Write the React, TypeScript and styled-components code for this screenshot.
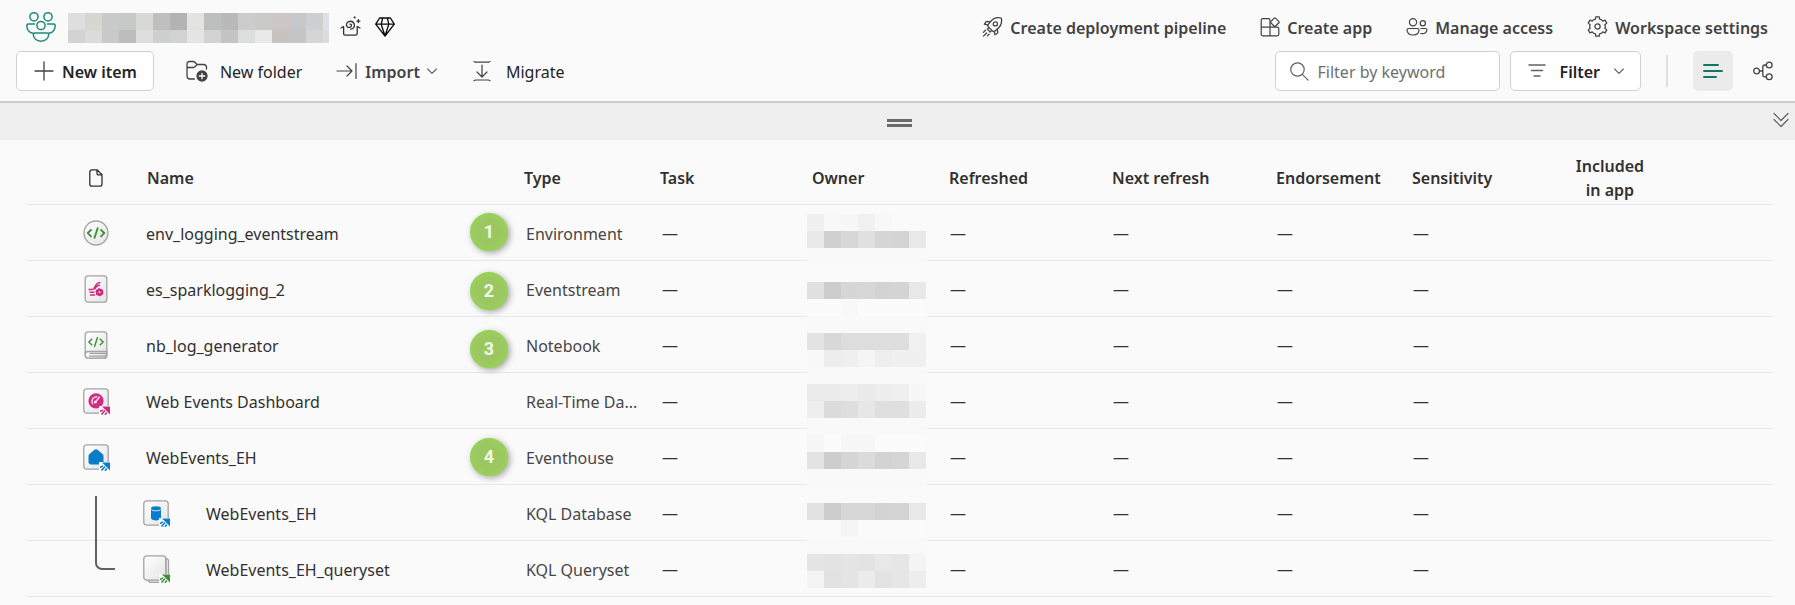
import React from "react";
import styled, { createGlobalStyle } from "styled-components";

const GlobalStyle = createGlobalStyle`
  *, *::before, *::after { box-sizing: border-box; }
  body {
    margin: 0;
    background: #fafafa;
    color: #242424;
    font-family: "Segoe UI", "Noto Sans", "Open Sans", sans-serif;
    font-size: 16px;
    line-height: 24px;
  }
  button, input { font: inherit; color: inherit; }
`;

/* ---------- Layout ---------- */

const Header = styled.header`
  display: flex;
  flex-direction: column;
  gap: 4px;
  padding: 6px 12px 10px 16px;
  border-bottom: 2px solid #cecece;
`;

const Bar = styled.div<{ $height: number }>`
  display: flex;
  align-items: center;
  justify-content: space-between;
  height: ${(p) => p.$height}px;
`;

const WorkspaceTitle = styled.div`
  display: flex;
  align-items: center;
  padding-left: 10px;
`;

const TitleMosaic = styled.div`
  display: grid;
  grid-template-columns: repeat(15, 17px) 6px;
  grid-template-rows: 17px 13px;
  margin: 3px 11px 0 12px;
`;

const Tile = styled.span<{ $color: string }>`
  background: ${(p) => p.$color};
`;

const TitleBadges = styled.div`
  display: flex;
  align-items: center;
  gap: 14px;
`;

const WorkspaceActions = styled.nav`
  display: flex;
  align-items: center;
  gap: 34px;
  padding-right: 15px;
`;

const Commands = styled.div`
  display: flex;
  align-items: center;
`;

const Label = styled.span`
  padding-top: 2px;
`;

const PlainButton = styled.button<{ $gap: number; $bold?: boolean; $start?: number }>`
  display: flex;
  align-items: center;
  gap: ${(p) => p.$gap}px;
  margin: 0 0 0 ${(p) => p.$start ?? 0}px;
  padding: 0;
  border: 0;
  background: none;
  color: ${(p) => (p.$bold ? "#424242" : "#242424")};
  font-weight: ${(p) => (p.$bold ? 600 : 400)};
  white-space: nowrap;
  cursor: pointer;
`;

const OutlineButton = styled.button<{ $gap: number }>`
  display: flex;
  align-items: center;
  gap: ${(p) => p.$gap}px;
  height: 40px;
  padding: 0 16px 0 17px;
  border: 1px solid #d1d1d1;
  border-radius: 5px;
  background: #fff;
  font-weight: 600;
  white-space: nowrap;
  cursor: pointer;
`;

const SearchBox = styled.label`
  display: flex;
  align-items: center;
  gap: 9px;
  width: 225px;
  height: 40px;
  margin-right: 10px;
  padding: 0 14px;
  border: 1px solid #d1d1d1;
  border-radius: 5px;
  background: #fff;
  color: #616161;
`;

const SearchInput = styled.input`
  flex: 1;
  min-width: 0;
  padding: 2px 0 0;
  border: 0;
  outline: 0;
  background: none;
  &::placeholder { color: #707070; opacity: 1; }
`;

const Divider = styled.span`
  width: 2px;
  height: 32px;
  margin: 0 25px;
  background: #e0e0e0;
`;

const ViewButton = styled.button<{ $active?: boolean }>`
  display: grid;
  place-items: center;
  width: 40px;
  height: 40px;
  margin-left: ${(p) => (p.$active ? 0 : 10)}px;
  padding: 0;
  border: 0;
  border-radius: 5px;
  background: ${(p) => (p.$active ? "#ebebeb" : "none")};
  color: ${(p) => (p.$active ? "#117865" : "#424242")};
  cursor: pointer;
`;

const Splitter = styled.div`
  display: grid;
  grid-template-columns: 1fr auto 1fr;
  align-items: center;
  height: 37px;
  padding: 0 6px 0 10px;
  background: #efefef;
`;

const Grip = styled.span`
  grid-column: 2;
  width: 25px;
  height: 8px;
  margin-top: 2px;
  border: solid #6b6b6b;
  border-width: 3px 0;
`;

const CollapseButton = styled.button`
  display: flex;
  justify-self: end;
  padding: 0 0 4px;
  border: 0;
  background: none;
  color: #616161;
  cursor: pointer;
`;

/* ---------- Item list ---------- */

const ListArea = styled.main`
  position: relative;
  padding: 0 22px 0 26px;
`;

const Table = styled.table`
  width: 100%;
  table-layout: fixed;
  border-collapse: separate;
  border-spacing: 0;
`;

const Col = styled.col<{ $width?: number }>`
  width: ${(p) => (p.$width ? `${p.$width}px` : "auto")};
`;

const Th = styled.th<{ $center?: boolean; $indent?: number }>`
  height: 65px;
  padding: 12px 0 0 ${(p) => p.$indent ?? 0}px;
  border-bottom: 1px solid #e8e8e8;
  color: #323130;
  font-weight: 600;
  text-align: ${(p) => (p.$center ? "center" : "left")};
`;

const Td = styled.td<{ $indent?: number; $muted?: boolean }>`
  position: relative;
  height: 56px;
  padding: 0 0 0 ${(p) => p.$indent ?? 0}px;
  border-bottom: 1px solid #e8e8e8;
  color: ${(p) => (p.$muted ? "#484644" : "#323130")};
  white-space: nowrap;
`;

const CellText = styled.div`
  padding-top: 2px;
`;

const ItemLink = styled.a`
  display: flex;
  align-items: center;
  gap: 36px;
  color: inherit;
  text-decoration: none;
`;

const IconSlot = styled.div`
  display: flex;
`;

const TreeLine = styled.span`
  position: absolute;
  top: 11px;
  left: 69px;
  width: 20px;
  height: 74px;
  border: solid #616161;
  border-width: 0 0 2px 2px;
  border-bottom-left-radius: 7px;
`;

const OwnerMosaic = styled.div`
  position: absolute;
  z-index: 1;
  top: 9px;
  left: 0;
  display: grid;
  grid-template-columns: repeat(7, 17px);
  grid-auto-rows: 17px;
  padding-right: 1px;
  background: #fafafa;
`;

const Pin = styled.span<{ $y: number }>`
  position: absolute;
  top: ${(p) => p.$y}px;
  left: 470px;
  display: grid;
  place-items: center;
  width: 38px;
  height: 38px;
  border: 2px solid #95d44d;
  border-radius: 50%;
  background: #9ac75f;
  box-shadow: 2px 2px 6px rgba(0, 0, 0, 0.35), inset 0 0 6px #a3cf6b;
  color: #f2f8e8;
  font: 700 18px/24px Roboto, Inter, sans-serif;
`;

/* ---------- Line icons ---------- */

type LineIconProps = { size: number; children: React.ReactNode; width?: number; stroke?: number; box?: string; color?: string };

function LineIcon({ size, children, width, stroke = 1.2, box = "0 0 20 20", color = "currentColor" }: LineIconProps) {
  return (
    <svg width={width ?? size} height={size} viewBox={box} fill="none" stroke={color} strokeWidth={stroke} strokeLinecap="round" strokeLinejoin="round" aria-hidden="true">
      {children}
    </svg>
  );
}

const WorkspaceLogo = () => (
  <LineIcon size={30} box="0 0 30 30" stroke={1.5} color="#1f8a76">
    <circle cx="8" cy="4.8" r="4.1" />
    <circle cx="22" cy="4.8" r="4.1" />
    <circle cx="15" cy="13.5" r="4.1" />
    <path d="M8.5 12H2.3C1.3 12 .8 12.6 .8 13.5c0 4 2.5 7.2 6.2 7.7" />
    <path d="M21.5 12h6.2c1 0 1.5.6 1.5 1.5 0 4-2.5 7.2-6.2 7.7" />
    <path d="M8.8 21h12.4c1 0 1.500.6 1.500 1.500 0 3.800-3.300 6.700-7.700 6.700s-7.700-2.900-7.700-6.700c0-.9.5-1.500 1.500-1.500Z" />
  </LineIcon>
);

const MagicBox = () => (
  <LineIcon size={21} box="0 0 21 21" stroke={1.3} color="#323232">
    <path d="M1 12 3.600 10.500v7.100c0 1 .6 1.600 1.600 1.600h10.400c1 0 1.600-.6 1.600-1.600v-7.100L20 12" />
    <path d="M10.600 13.200c3-.4 4.100-2.500 3.700-4.700C13.800 6.200 11.900 5 9.800 5.300 7.600 5.600 6.200 7.300 6.500 9.100c.2 1.600 1.600 2.500 3 2.300 1.300-.2 2.100-1.300 1.900-2.300-.1-.7-.8-1.100-1.500-.9" />
    <path d="M18.400 3.600v3M16.900 5.100h3" />
    <circle cx="14.600" cy="1.400" r=".4" fill="#323232" />
  </LineIcon>
);

const Diamond = () => (
  <LineIcon size={20} box="0 0 20 20" stroke={1.300} color="#0a0a0a">
    <path d="M4.600 1h10.800L19.300 7.200 10 19 .7 7.200ZM.7 7.200h18.600M7.700 1 6.200 7.200 10 19l3.800-11.800L12.300 1" />
  </LineIcon>
);

const Rocket = () => (
  <LineIcon size={21}>
    <path d="M18.300 1.900c-4.300-1.200-7.600.2-10.400 3.600L5.600 8.400c-.4.500-.4 1 .1 1.500l4.700 4.700c.4.400 1 .4 1.500.1l2.700-2.300c3.400-2.900 4.900-6.200 3.700-10.500Z" />
    <circle cx="12.700" cy="7.500" r="2" />
    <path d="M7.800 5.600 4.900 5.200c-.5 0-.9.100-1.200.4L2.300 7.800l3.500.7M14.600 12.500l.4 2.800c0 .5-.1.900-.4 1.200l-2.200 1.400-.8-3.400M6.600 11l-1.500 1.500 2.700 2.700 1.500-1.500M3.300 13.600l-2 2M4.400 16.200l-3 3M6.800 17.300l-1.500 1.500" />
  </LineIcon>
);

const AppAdd = () => (
  <LineIcon size={20}>
    <path d="M10 10.200H1.200V3.200c0-.9.600-1.500 1.500-1.500H8.500c.9 0 1.500.6 1.500 1.500v15.600H2.700c-.9 0-1.500-.6-1.500-1.500v-7.100M10 10.200h7.300c.9 0 1.500.6 1.500 1.500v5.600c0 .9-.6 1.500-1.500 1.500H10" />
    <path d="M14 1.300c.5-.5 1.200-.5 1.700 0l3 3c.5.500.5 1.200 0 1.700l-3 3c-.5.500-1.200.5-1.700 0l-3-3c-.5-.5-.5-1.200 0-1.700Z" />
  </LineIcon>
);

const People = () => (
  <LineIcon size={20} width={22} box="0 0 22 20">
    <circle cx="7" cy="5.200" r="3.600" />
    <circle cx="16.800" cy="6.200" r="2.600" />
    <path d="M2.600 11.500h8.800c1 0 1.600.6 1.600 1.600 0 3-2.500 4.900-6 4.900s-6-1.900-6-4.900c0-1 .6-1.600 1.600-1.600ZM14.900 11.500h4.500c.9 0 1.500.6 1.500 1.500 0 2.600-2.800 4.300-6.100 3.500" />
  </LineIcon>
);

const polar = (radius: number, degrees: number) => {
  const a = (degrees * Math.PI) / 180;
  return `${(10 + radius * Math.sin(a)).toFixed(2)} ${(10 - radius * Math.cos(a)).toFixed(2)}`;
};

const gearPath =
  "M" +
  [0, 60, 120, 180, 240, 300]
    .map((t) => [polar(9.4, t - 10), polar(9.4, t + 10), polar(7.2, t + 16), polar(7.4, t + 26), polar(7.4, t + 34), polar(7.2, t + 44)].join("L"))
    .join("L") +
  "Z";

const Gear = () => (
  <LineIcon size={21}>
    <path d={gearPath} />
    <circle cx="10" cy="10" r="2.500" />
  </LineIcon>
);

const Plus = () => (
  <LineIcon size={20} stroke={1.300} color="#424242"><path d="M10 1v18M1 10h18" /></LineIcon>
);

const FolderAdd = () => (
  <LineIcon size={22} box="0 0 22 22" stroke={1.300} color="#424242">
    <path d="M8.500 19H4c-1.700 0-3-1.300-3-3V4c0-1.500 1.100-2.500 2.500-2.500h3.700c.7 0 1.200.2 1.700.7L11 4.500h6.500c1.700 0 3 1.300 3 3V9M1 7.500h6.200c.7 0 1.200-.2 1.700-.7L11 4.500" />
    <circle cx="16" cy="16" r="5" fill="#424242" />
    <path d="M16 13.300v5.400M13.300 16h5.400" stroke="#fff" />
  </LineIcon>
);

const ImportArrow = () => (
  <LineIcon size={20} width={22} box="0 0 22 20" stroke={1.200}>
    <path d="M1 10h15M11 5l5 5-5 5M20 2.500v15" />
  </LineIcon>
);

const Chevron = () => (
  <LineIcon size={10} box="0 0 10 10" stroke={1.100} color="#616161"><path d="M.6 3 5 7.400 9.400 3" /></LineIcon>
);

const MigrateArrow = () => (
  <LineIcon size={22} width={18} box="0 0 18 22" stroke={1.200} color="#424242">
    <path d="M1 1.500 2.500 2.200h13L17 1.500M9 5v12M4 12l5 5 5-5M1 20.700 2.500 20h13l1.500.7" />
  </LineIcon>
);

const Search = () => (
  <LineIcon size={19} box="0 0 19 19" stroke={1.200}><circle cx="7.500" cy="7.500" r="6.700" /><path d="m12.300 12.300 5.800 5.800" /></LineIcon>
);

const FilterLines = () => (
  <LineIcon size={18} box="0 0 18 18" stroke={1.500} color="#616161"><path d="M1 3h16M3.500 8.500h11M6 14h6" /></LineIcon>
);

const ListLines = () => (
  <LineIcon size={20} stroke={1.900}><path d="M1 4h14M1 10h18M1 16h12" /></LineIcon>
);

const Lineage = () => (
  <LineIcon size={20} stroke={1.300}>
    <circle cx="3.600" cy="10" r="2.900" /><circle cx="16.200" cy="4" r="2.900" /><circle cx="16.200" cy="15.800" r="2.900" />
    <path d="M6.600 10h3.200M13.200 4h-1.400c-1.300 0-2 .7-2 2v7.800c0 1.300.7 2 2 2h1.400" />
  </LineIcon>
);

const DoubleChevron = () => (
  <LineIcon size={16} box="0 0 16 16" stroke={1.200}><path d="m1 1.500 7 7 7-7M1 7.500l7 7 7-7" /></LineIcon>
);

const Page = () => (
  <LineIcon size={18} width={14} box="0 0 14 18" stroke={1.300} color="#323130">
    <path d="M3 .8h5L13 5.800V15c0 1.300-.9 2.200-2.200 2.200H3C1.700 17.200.8 16.300.8 15V3C.8 1.700 1.700.8 3 .8ZM8 .8v3.500C8 5.300 8.600 5.800 9.500 5.800H13" />
  </LineIcon>
);

/* ---------- Item type icons ---------- */

type Kind = "environment" | "eventstream" | "notebook" | "dashboard" | "eventhouse" | "database" | "queryset";

const GREEN = "#3c9039";
const PINK = "#cf2a84";
const BLUE = "#0a7cc9";

const Shortcut = ({ color }: { color: string }) => (
  <g>
    <path d="M17 19h11v9H17z" fill="#fafafa" />
    <path d="M20 19.500h8v8Z" fill={color} />
    <path d="m18 24.500 3-1.700M19.500 27.500l3.500-4M23 28l1.700-2.500" stroke={color} strokeWidth="1.500" />
  </g>
);

function ItemIcon({ kind }: { kind: Kind }) {
  const square = kind === "dashboard" || kind === "eventhouse" || kind === "database";
  const tall = kind === "eventstream" || kind === "notebook";
  return (
    <svg width="28" height="28" viewBox="0 0 28 28" fill="none" aria-hidden="true">
      <defs>
        <linearGradient id={`face-${kind}`} x1="0" y1="0" x2="1" y2="1">
          <stop offset="0" stopColor="#ffffff" />
          <stop offset="1" stopColor="#e4e4e4" />
        </linearGradient>
      </defs>
      <g stroke="#a3a3a3" strokeWidth="1.300" fill={`url(#face-${kind})`}>
        {kind === "environment" && <circle cx="14" cy="14" r="12" />}
        {tall && <rect x="3.200" y=".8" width="21.600" height="26.400" rx="3" />}
        {square && <rect x="1.800" y="1.800" width="24.400" height="24.400" rx="3" />}
        {kind === "queryset" && (
          <>
            <path d="M8 27.300h16c1.500 0 2.500-1 2.500-2.500V5L24 3v22H5Z" />
            <rect x="1.800" y=".8" width="22" height="24.400" rx="3" />
          </>
        )}
        {kind === "notebook" && (
          <path d="M3.200 23.500c0-2 1.200-3 3-3h18.600v3.700c0 1.900-1.100 3-3 3H6.200c-1.900 0-3-1.300-3-3.700ZM24.800 22.300H7.500M7 25.200h15.500c1.300 0 2.300-.9 2.300-2.900" />
        )}
      </g>
      {kind === "environment" && (
        <path d="m9.500 10.300-3.700 3.800 3.700 3.800M18.500 10.300l3.700 3.800-3.700 3.800M15.900 8.500l-3.600 11" stroke={GREEN} strokeWidth="1.900" />
      )}
      {kind === "notebook" && (
        <path d="m10.200 7.700-3.300 3.300 3.300 3.300M17.800 7.700l3.300 3.300-3.300 3.300M15.600 6l-3.200 10" stroke={GREEN} strokeWidth="1.400" />
      )}
      {kind === "eventstream" && (
        <g stroke={PINK} strokeWidth="1.500">
          <path d="M6.500 14.500h4c2.800 0 2-7 8-7M12.500 14.500c1-2.500 2-4.300 5.500-4.300M7.500 17.300h5M8 20h5" />
          <circle cx="17.500" cy="17.200" r="3.300" fill={PINK} strokeDasharray="2 1.450" />
          <circle cx="17.500" cy="17.200" r="2.200" fill="#fff" strokeWidth="2.600" />
        </g>
      )}
      {kind === "dashboard" && (
        <>
          <circle cx="14" cy="13.800" r="7.600" fill={PINK} />
          <path d="M10.500 16.800c-1.600-3.600.4-7 4.300-7.100M13.500 15l4-5" stroke="#f9d3e7" strokeWidth="1.500" strokeLinecap="round" />
          <circle cx="13.300" cy="15" r="1.600" fill="#f9d3e7" />
          <Shortcut color={PINK} />
        </>
      )}
      {kind === "eventhouse" && (
        <>
          <path d="M12.500 6.800c.9-.8 2.100-.8 3 0l5 4.200c.7.600 1 1.300 1 2.100V19c0 1.500-1 2.500-2.500 2.500H9c-1.500 0-2.500-1-2.500-2.500v-5.900c0-.8.300-1.500 1-2.100Z" fill={BLUE} />
          <Shortcut color={BLUE} />
        </>
      )}
      {kind === "database" && (
        <>
          <path d="M9 10v9c0 1.500 2.200 2.500 5 2.500s5-1 5-2.500v-9Z" fill={BLUE} />
          <ellipse cx="14" cy="9.500" rx="5" ry="2.200" fill={BLUE} />
          <path d="M9.300 10.500c1 1.800 8.400 1.800 9.400 0" stroke="#fff" strokeWidth=".8" />
          <Shortcut color={BLUE} />
        </>
      )}
      {kind === "queryset" && <Shortcut color={GREEN} />}
    </svg>
  );
}

/* ---------- Data ---------- */

type Item = { name: string; kind: Kind; type: string; child?: boolean };

const items: Item[] = [
  { name: "env_logging_eventstream", kind: "environment", type: "Environment" },
  { name: "es_sparklogging_2", kind: "eventstream", type: "Eventstream" },
  { name: "nb_log_generator", kind: "notebook", type: "Notebook" },
  { name: "Web Events Dashboard", kind: "dashboard", type: "Real-Time Da..." },
  { name: "WebEvents_EH", kind: "eventhouse", type: "Eventhouse" },
  { name: "WebEvents_EH", kind: "database", type: "KQL Database", child: true },
  { name: "WebEvents_EH_queryset", kind: "queryset", type: "KQL Queryset", child: true },
];

const firstChild = items.findIndex((item) => item.child);

/* Callout numbers placed freely over the list. */
const pins = [
  { label: "1", y: 73 },
  { label: "2", y: 132 },
  { label: "3", y: 190 },
  { label: "4", y: 298 },
];

const titleTiles = (
  "dedede d6d6d5 c8c9c8 c7c9c9 d8d8d7 bfbfbf b3b3b3 e3e3e2 bdbfbf b9b9b9 cccccc cacac9 ccc7c4 c5c7c9 cdcfd0 dfe0e3 " +
  "d3d3d3 dcdbd9 c9c9c9 bcbcbc dededf cdd0cf d0d3d2 e6e5e3 d2d4d3 c4c4c4 dcdedd e8e8e8 c8c3bf c4c5c7 d5d5d3 dbdce0"
).split(" ");

const ownerTiles = [
  "f0 f8 f7 f1 f8 fa fa",
  "e9 d0 d7 e0 d6 d4 e8",
  "f9 f9 f9 f9 f9 f9 f9",
  "fa fa fa fa fa fa fa",
  "e1 cd d6 d7 d3 d4 e8",
  "fb fb f8 fb fb fb fb",
  "f9 f9 f9 f9 f9 f9 f9",
  "e3 d8 dd dd de de f1",
  "f8 ed ef f5 ee f0 f0",
  "f9 f9 f9 f9 f9 f9 f9",
  "eb eb ed ea ed ef f7",
  "ee db de e7 df df ec",
  "f9 f9 f9 f9 f9 f9 f9",
  "f7 fb f7 f7 fb fb fb",
  "e3 cd d5 db d3 d5 e8",
  "f9 f9 f9 f9 f9 f9 f9",
  "fa fa fa fa fa fa fa",
  "e2 cd d7 d7 d3 d4 e8",
  "fb fb f5 fb fb fb fb",
  "f9 f9 f9 f9 f9 f9 f9",
  "e5 e3 e5 e3 e8 e6 f4",
  "f4 e2 e4 ec e3 e6 ed",
].flatMap((row) => row.split(" "));

const columnWidths = [116, 382, 136, 147, 142, 163, 164, 136, 128, 140];

export default function App() {
  return (
    <>
      <GlobalStyle />
      <Header>
        <Bar $height={41}>
          <WorkspaceTitle>
            <WorkspaceLogo />
            <TitleMosaic>
              {titleTiles.map((c, i) => <Tile key={i} $color={`#${c}`} />)}
            </TitleMosaic>
            <TitleBadges><MagicBox /><Diamond /></TitleBadges>
          </WorkspaceTitle>
          <WorkspaceActions aria-label="Workspace">
            <PlainButton $gap={7} $bold><Rocket /><Label>Create deployment pipeline</Label></PlainButton>
            <PlainButton $gap={7} $bold><AppAdd /><Label>Create app</Label></PlainButton>
            <PlainButton $gap={7} $bold><People /><Label>Manage access</Label></PlainButton>
            <PlainButton $gap={7} $bold><Gear /><Label>Workspace settings</Label></PlainButton>
          </WorkspaceActions>
        </Bar>
        <Bar $height={40}>
          <Commands>
            <OutlineButton $gap={8}><Plus /><Label>New item</Label></OutlineButton>
            <PlainButton $gap={12} $start={32}><FolderAdd /><Label>New folder</Label></PlainButton>
            <PlainButton $gap={7} $bold $start={34}><ImportArrow /><Label>Import</Label><Chevron /></PlainButton>
            <PlainButton $gap={15} $start={36}><MigrateArrow /><Label>Migrate</Label></PlainButton>
          </Commands>
          <Commands>
            <SearchBox>
              <Search />
              <SearchInput type="text" aria-label="Filter by keyword" placeholder="Filter by keyword" />
            </SearchBox>
            <OutlineButton $gap={14}><FilterLines /><Label>Filter</Label><Chevron /></OutlineButton>
            <Divider />
            <ViewButton $active aria-label="List view"><ListLines /></ViewButton>
            <ViewButton aria-label="Lineage view"><Lineage /></ViewButton>
          </Commands>
        </Bar>
      </Header>
      <Splitter>
        <Grip />
        <CollapseButton aria-label="Collapse"><DoubleChevron /></CollapseButton>
      </Splitter>
      <ListArea>
        <Table>
          <colgroup>
            {columnWidths.map((w, i) => <Col key={i} $width={w} />)}
            <Col />
          </colgroup>
          <thead>
            <tr>
              <Th $indent={63} aria-label="Item icon"><IconSlot><Page /></IconSlot></Th>
              <Th $indent={5}>Name</Th>
              <Th>Type</Th>
              <Th>Task</Th>
              <Th $indent={5}>Owner</Th>
              <Th>Refreshed</Th>
              <Th>Next refresh</Th>
              <Th>Endorsement</Th>
              <Th>Sensitivity</Th>
              <Th $center>Included<br />in app</Th>
              <Th aria-hidden="true" />
            </tr>
          </thead>
          <tbody>
            {items.map((item, i) => (
              <tr key={i}>
                <Td $indent={56}>
                  {!item.child && <IconSlot><ItemIcon kind={item.kind} /></IconSlot>}
                  {i === firstChild && <TreeLine />}
                </Td>
                <Td $indent={item.child ? 0 : 4}>
                  <ItemLink href="#">
                    {item.child && <ItemIcon kind={item.kind} />}
                    <Label>{item.name}</Label>
                  </ItemLink>
                </Td>
                <Td $indent={2} $muted><CellText>{item.type}</CellText></Td>
                <Td $indent={2}>—</Td>
                <Td>
                  {i === 0 && (
                    <OwnerMosaic>
                      {ownerTiles.map((c, n) => <Tile key={n} $color={`#${c}${c}${c}`} />)}
                    </OwnerMosaic>
                  )}
                </Td>
                <Td $indent={1}>—</Td>
                <Td $indent={1}>—</Td>
                <Td $indent={1}>—</Td>
                <Td $indent={1}>—</Td>
                <Td />
                <Td />
              </tr>
            ))}
          </tbody>
        </Table>
        {pins.map((pin) => <Pin key={pin.label} $y={pin.y}>{pin.label}</Pin>)}
      </ListArea>
    </>
  );
}
